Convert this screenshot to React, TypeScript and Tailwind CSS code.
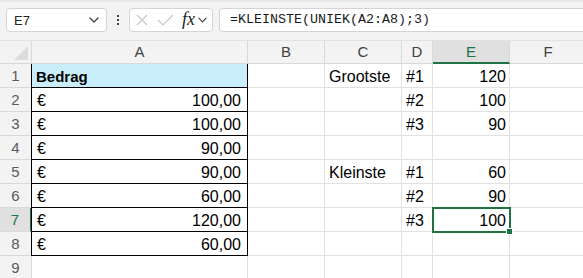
import React from "react";

const COLS = [
  { key: "A", w: "w-[216px]" },
  { key: "B", w: "w-[77px]" },
  { key: "C", w: "w-[77px]" },
  { key: "D", w: "w-[31px]" },
  { key: "E", w: "w-[77px]" },
  { key: "F", w: "w-[77px]" },
];

type RowData = { A?: [string, string] | string; C?: string; D?: string; E?: string };

const ROWS: RowData[] = [
  { A: "Bedrag", C: "Grootste", D: "#1", E: "120" },
  { A: ["€", "100,00"], D: "#2", E: "100" },
  { A: ["€", "100,00"], D: "#3", E: "90" },
  { A: ["€", "90,00"] },
  { A: ["€", "90,00"], C: "Kleinste", D: "#1", E: "60" },
  { A: ["€", "60,00"], D: "#2", E: "90" },
  { A: ["€", "120,00"], D: "#3", E: "100" },
  { A: ["€", "60,00"] },
  {},
];

function Chevron({ className }: { className?: string }) {
  return (
    <svg className={className} width="10" height="6" viewBox="0 0 10 6" fill="none">
      <path d="M1 1l4 4 4-4" stroke="#424242" strokeWidth="1.3" strokeLinecap="round" strokeLinejoin="round" />
    </svg>
  );
}

function Toolbar() {
  return (
    <div className="h-[40px] bg-[#f3f3f3] border-t-[2px] border-[#e6e6e6] flex items-start pt-[6px] pl-[6px]">
      <div className="w-[101px] h-[24px] bg-white border border-[#d4d4d4] rounded-[4px] flex items-center justify-between pl-[7px] pr-[7px]">
        <span className="text-[13px] text-[#242424] leading-none">E7</span>
        <Chevron />
      </div>
      <div className="w-[22px] h-[24px] flex flex-col items-center justify-center gap-[2px]">
        <div className="w-[2px] h-[2px] bg-[#424242]" />
        <div className="w-[2px] h-[2px] bg-[#424242]" />
        <div className="w-[2px] h-[2px] bg-[#424242]" />
      </div>
      <div className="w-[84px] h-[24px] bg-white border border-[#d4d4d4] rounded-[4px] flex items-center pl-[6px]">
        <svg width="12" height="12" viewBox="0 0 12 12" fill="none">
          <path d="M1 1l10 10M11 1L1 11" stroke="#c6c6c6" strokeWidth="1.1" />
        </svg>
        <svg className="ml-[9px]" width="17" height="12" viewBox="0 0 17 12" fill="none">
          <path d="M1 6l5 5L16 1" stroke="#c6c6c6" strokeWidth="1.1" />
        </svg>
        <span
          className="ml-[8px] text-[18px] italic leading-none text-[#242424] -mt-[2px]"
          style={{ fontFamily: '"Liberation Serif", "Times New Roman", serif' }}
        >
          fx
        </span>
        <Chevron className="ml-[3px] w-[9px]" />
      </div>
      <div className="ml-[6px] flex-1 h-[24px] bg-white border border-r-0 border-[#d4d4d4] rounded-l-[4px] flex items-center pl-[10px]">
        <span
          className="text-[13.33px] text-[#1a1a1a] leading-none"
          style={{ fontFamily: '"Liberation Mono", "Courier New", monospace' }}
        >
          =KLEINSTE(UNIEK(A2:A8);3)
        </span>
      </div>
    </div>
  );
}

function HeaderRow() {
  return (
    <div className="flex h-[24px] bg-[#f3f3f3] border-t border-[#e2e2e2]">
      <div className="w-[32px] h-full border-r border-b border-[#d9d9d9] relative shrink-0">
        <svg className="absolute right-[3px] bottom-[3px]" width="14" height="14" viewBox="0 0 14 14">
          <path d="M14 0V14H0Z" fill="#dcdcdc" />
        </svg>
      </div>
      {COLS.map((c) => {
        const sel = c.key === "E";
        return (
          <div
            key={c.key}
            className={`${c.w} shrink-0 h-full border-r border-[#d9d9d9] flex items-center justify-center text-[15px] ${
              sel ? "bg-[#e0e0e0] text-[#1f7244] border-b-2 border-b-[#1f7244]" : "text-[#424242] border-b border-b-[#d9d9d9]"
            }`}
          >
            <span className="mt-[1px]">{c.key}</span>
          </div>
        );
      })}
    </div>
  );
}

function DataRow({ r, i }: { r: RowData; i: number }) {
  const n = i + 1;
  const inA = n <= 8;
  const selRow = n === 7;
  return (
    <div className="flex h-[24px]">
      <div
        className={`w-[32px] shrink-0 h-full border-b border-[#d9d9d9] flex items-center justify-center text-[15px] ${
          selRow ? "bg-[#e0e0e0] text-[#1f7244] border-r-2 border-r-[#1f7244]" : "bg-[#f3f3f3] text-[#5a5a5a] border-r border-r-[#d9d9d9]"
        }`}
      >
        <span className="mt-[1px]">{n}</span>
      </div>
      {COLS.map((c) => {
        let content: React.ReactNode = null;
        const isA = c.key === "A";
        let extra = `${c.w} border-r border-b border-[#e1e1e1]`;
        if (isA && inA) {
          extra = `w-[217px] -ml-[1px] border-l border-r border-b border-black ${n === 1 ? "bg-[#caedfb]" : ""}`;
        }
        if (isA) {
          if (typeof r.A === "string") {
            content = <span className="pl-[4px] font-bold text-[15px]">{r.A}</span>;
          } else if (r.A) {
            content = (
              <div className="flex w-full justify-between pl-[5px] pr-[6px]">
                <span>{r.A[0]}</span>
                <span>{r.A[1]}</span>
              </div>
            );
          }
        } else if (c.key === "C" && r.C) {
          content = <span className="pl-[4px]">{r.C}</span>;
        } else if (c.key === "D" && r.D) {
          content = <span className="pl-[4px]">{r.D}</span>;
        } else if (c.key === "E" && r.E) {
          content = <span className="w-full text-right pr-[3px]">{r.E}</span>;
        }
        const sel = c.key === "E" && n === 7;
        return (
          <div
            key={c.key}
            className={`shrink-0 h-full flex items-start pt-[1px] leading-[23px] text-[16px] text-black relative ${extra} ${
              sel ? "z-10" : ""
            }`}
          >
            {content}
            {sel && (
              <>
                <div className="absolute -left-[1px] -top-[1px] w-[79px] h-[26px] border-2 border-[#1f7244] pointer-events-none" />
                <div className="absolute -right-[4px] -bottom-[4px] w-[5px] h-[5px] bg-[#1f7244] border border-white box-content" />
              </>
            )}
          </div>
        );
      })}
    </div>
  );
}

export default function App() {
  return (
    <div
      className="w-[583px] h-[278px] overflow-hidden bg-white"
      style={{ fontFamily: '"Liberation Sans", Arial, sans-serif' }}
    >
      <Toolbar />
      <HeaderRow />
      {ROWS.map((r, i) => (
        <DataRow key={i} r={r} i={i} />
      ))}
    </div>
  );
}
